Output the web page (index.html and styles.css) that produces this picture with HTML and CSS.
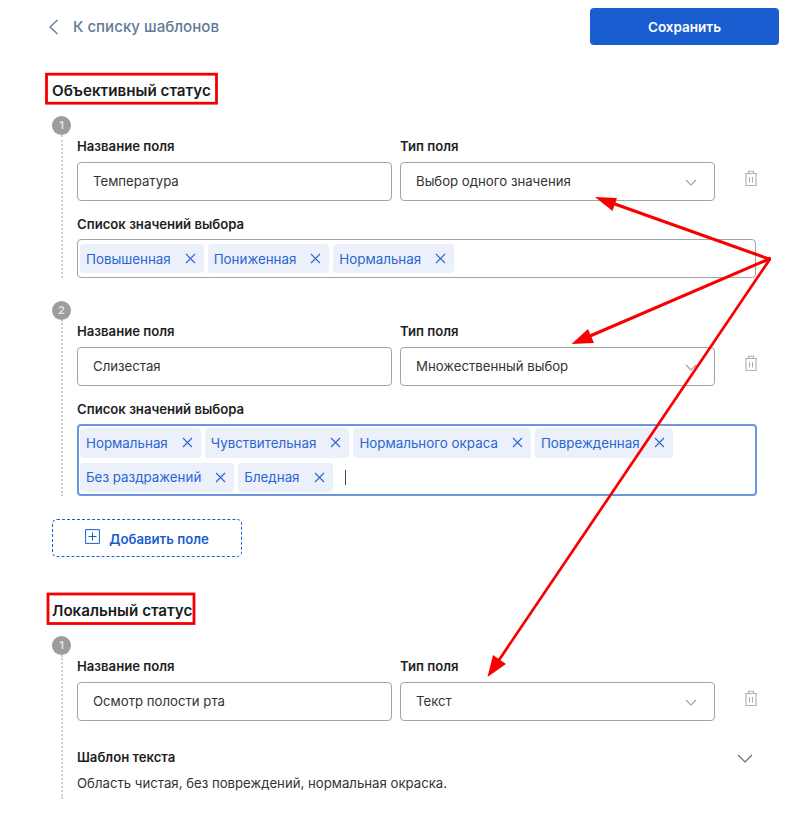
FILE: index.html
```html
<!DOCTYPE html>
<html lang="ru">
<head>
<meta charset="utf-8">
<title>Шаблон</title>
<link rel="stylesheet" href="styles.css">
</head>
<body>
<main class="page">
  <header class="topbar">
    <a class="back">
      <svg class="back-icon" width="11" height="16" viewBox="0 0 11 16"><path d="M9.5 1 L2 8 L9.5 15" fill="none" stroke="#5f7f9f" stroke-width="1.4"/></svg>
      <span>К списку шаблонов</span>
    </a>
    <button class="save">Сохранить</button>
  </header>

  <section class="section section-first">
    <h2 class="section-title">Объективный статус</h2>

    <div class="item">
      <div class="badge">1</div>
      <div class="item-body">
        <div class="row">
          <div class="col"><div class="label">Название поля</div><div class="control">Температура</div></div>
          <div class="col"><div class="label">Тип поля</div><div class="control">Выбор одного значения<svg class="chev" width="12" height="7" viewBox="0 0 12 7"><path d="M1 1 L6 6 L11 1" fill="none" stroke="#a0a0a0" stroke-width="1.1"/></svg></div></div>
          <svg class="trash" width="14" height="17" viewBox="0 0 14 17"><path d="M1 3.5H13M2 3.5V15.5H12V3.5M4.5 3.5V1.2H9.5V3.5M5.5 7V12.5M8.5 7V12.5" fill="none" stroke="#b0b0b0" stroke-width="1.1"/></svg>
        </div>
        <div class="label label-list">Список значений выбора</div>
        <div class="tags">
          <span class="tag">Повышенная<svg class="x" width="11" height="11" viewBox="0 0 11 11"><path d="M1 1L10 10M10 1L1 10" stroke="#2a66d0" stroke-width="1.1"/></svg></span>
          <span class="tag">Пониженная<svg class="x" width="11" height="11" viewBox="0 0 11 11"><path d="M1 1L10 10M10 1L1 10" stroke="#2a66d0" stroke-width="1.1"/></svg></span>
          <span class="tag">Нормальная<svg class="x" width="11" height="11" viewBox="0 0 11 11"><path d="M1 1L10 10M10 1L1 10" stroke="#2a66d0" stroke-width="1.1"/></svg></span>
        </div>
      </div>
    </div>

    <div class="item">
      <div class="badge">2</div>
      <div class="item-body">
        <div class="row">
          <div class="col"><div class="label">Название поля</div><div class="control">Слизестая</div></div>
          <div class="col"><div class="label">Тип поля</div><div class="control">Множественный выбор<svg class="chev" width="12" height="7" viewBox="0 0 12 7"><path d="M1 1 L6 6 L11 1" fill="none" stroke="#a0a0a0" stroke-width="1.1"/></svg></div></div>
          <svg class="trash" width="14" height="17" viewBox="0 0 14 17"><path d="M1 3.5H13M2 3.5V15.5H12V3.5M4.5 3.5V1.2H9.5V3.5M5.5 7V12.5M8.5 7V12.5" fill="none" stroke="#b0b0b0" stroke-width="1.1"/></svg>
        </div>
        <div class="label label-list">Список значений выбора</div>
        <div class="tags tags-focus">
          <span class="tag">Нормальная<svg class="x" width="11" height="11" viewBox="0 0 11 11"><path d="M1 1L10 10M10 1L1 10" stroke="#2a66d0" stroke-width="1.1"/></svg></span>
          <span class="tag">Чувствительная<svg class="x" width="11" height="11" viewBox="0 0 11 11"><path d="M1 1L10 10M10 1L1 10" stroke="#2a66d0" stroke-width="1.1"/></svg></span>
          <span class="tag">Нормального окраса<svg class="x" width="11" height="11" viewBox="0 0 11 11"><path d="M1 1L10 10M10 1L1 10" stroke="#2a66d0" stroke-width="1.1"/></svg></span>
          <span class="tag">Поврежденная<svg class="x" width="11" height="11" viewBox="0 0 11 11"><path d="M1 1L10 10M10 1L1 10" stroke="#2a66d0" stroke-width="1.1"/></svg></span>
          <span class="tag">Без раздражений<svg class="x" width="11" height="11" viewBox="0 0 11 11"><path d="M1 1L10 10M10 1L1 10" stroke="#2a66d0" stroke-width="1.1"/></svg></span>
          <span class="tag">Бледная<svg class="x" width="11" height="11" viewBox="0 0 11 11"><path d="M1 1L10 10M10 1L1 10" stroke="#2a66d0" stroke-width="1.1"/></svg></span>
          <span class="caret"></span>
        </div>
      </div>
    </div>

    <button class="add">
      <svg class="add-icon" width="15" height="15" viewBox="0 0 15 15"><path d="M.6.6H14.4V14.4H.6ZM7.5 3.5V11.5M3.5 7.5H11.5" fill="none" stroke="#1a5dd0" stroke-width="1"/></svg>
      <span>Добавить поле</span>
    </button>
  </section>

  <section class="section section-second">
    <h2 class="section-title">Локальный статус</h2>
    <div class="item">
      <div class="badge">1</div>
      <div class="item-body">
        <div class="row">
          <div class="col"><div class="label">Название поля</div><div class="control">Осмотр полости рта</div></div>
          <div class="col"><div class="label">Тип поля</div><div class="control">Текст<svg class="chev" width="12" height="7" viewBox="0 0 12 7"><path d="M1 1 L6 6 L11 1" fill="none" stroke="#a0a0a0" stroke-width="1.1"/></svg></div></div>
          <svg class="trash" width="14" height="17" viewBox="0 0 14 17"><path d="M1 3.5H13M2 3.5V15.5H12V3.5M4.5 3.5V1.2H9.5V3.5M5.5 7V12.5M8.5 7V12.5" fill="none" stroke="#b0b0b0" stroke-width="1.1"/></svg>
        </div>
        <div class="template-head">
          <div class="label">Шаблон текста</div>
          <svg class="big-chev" width="16" height="9" viewBox="0 0 16 9"><path d="M1 1 L8 8 L15 1" fill="none" stroke="#6a6a6a" stroke-width="1.2"/></svg>
        </div>
        <p class="template-text">Область чистая, без повреждений, нормальная окраска.</p>
      </div>
    </div>
  </section>
</main>

<svg class="annotations" width="800" height="817" viewBox="0 0 800 817">
  <g fill="none" stroke="#f40000" stroke-width="2.8">
    <rect x="46.5" y="74.2" width="170" height="29"/>
    <rect x="48" y="594" width="146" height="29.5"/>
  </g>
  <g fill="none" stroke="#f80000">
    <path d="M769 259 L612 203" stroke-width="3"/>
    <path d="M769 259 L590 336" stroke-width="3"/>
    <path d="M770 259 L499 660" stroke-width="2.7"/>
  </g>
  <g fill="#f80000">
    <polygon points="595,197 617,198 612.5,211"/>
    <polygon points="571.5,344 588,329 594,343"/>
    <polygon points="487.5,677 493,655 506,664"/>
    <circle cx="769" cy="259" r="2.2"/>
  </g>
</svg>
</body>
</html>
```

FILE: styles.css
```css
* { box-sizing: border-box; }
html, body { margin: 0; padding: 0; }
body {
  width: 800px;
  height: 817px;
  overflow: hidden;
  position: relative;
  background: #fff;
  color: #1f1f1f;
  font-family: Inter, "Liberation Sans", sans-serif;
}
.page { padding: 8px 21px 0 52px; }

.topbar {
  display: flex;
  justify-content: space-between;
  align-items: center;
  height: 37px;
  margin-left: -4px;
}
.back {
  display: flex;
  align-items: center;
  gap: 14px;
  color: #5f7b98;
  font-size: 15.1px;
  font-weight: 500;
}
.save {
  width: 189px;
  height: 37px;
  border: 0;
  border-radius: 4px;
  background: #1a5dd0;
  color: #fff;
  font: 600 13.5px Inter, "Liberation Sans", sans-serif;
}

.section-first { margin-top: 36px; }
.section-second { margin-top: 44px; }
.section-title {
  margin: 0;
  height: 20px;
  line-height: 20px;
  font-size: 15.2px;
  font-weight: 600;
  color: #1b1b1b;
}

.item { margin-top: 23px; }
.section-title + .item { margin-top: 15px; }
.badge {
  width: 19px;
  height: 19px;
  border-radius: 50%;
  background: #9c9c9c;
  color: #e4e4e4;
  font-size: 11px;
  font-weight: 600;
  line-height: 19px;
  text-align: center;
}
.item-body {
  margin-left: 9px;
  padding: 3px 0 0 14px;
  border-left: 2px dotted #cfcfcf;
}
.row { display: flex; align-items: flex-start; gap: 8px; }
.col { width: 315px; flex: none; }
.label {
  height: 16px;
  line-height: 16px;
  font-size: 13.15px;
  font-weight: 600;
  color: #1f1f1f;
}
.label-list { margin-top: 15.5px; }
.control {
  display: flex;
  align-items: center;
  justify-content: space-between;
  height: 38.5px;
  margin-top: 8px;
  padding: 0 17px 0 15px;
  border: 1px solid #a4a4a4;
  border-radius: 4px;
  font-size: 13.2px;
  color: #333;
}
.chev { margin-top: 2px; }
.trash { margin: 32px 0 0 21px; flex: none; }

.tags {
  display: flex;
  flex-wrap: wrap;
  gap: 5px 4px;
  align-items: center;
  margin-top: 7px;
  padding: 3.75px 2px;
  width: 679px;
  height: 39px;
  border: 1px solid #a4a4a4;
  border-radius: 4px;
}
.tags-focus {
  border: 2px solid #6c97e0;
  padding: 2px 1px;
  width: 680px;
  height: 72px;
}
.tag {
  display: inline-flex;
  align-items: center;
  gap: 14px;
  height: 29.5px;
  padding: 0 8px 0 6px;
  border-radius: 4px;
  background: #ebf0fb;
  color: #2a66d0;
  font-size: 13.35px;
}
.caret {
  width: 1.5px;
  height: 15px;
  margin-left: 8px;
  background: #444;
}

.add {
  display: flex;
  align-items: center;
  justify-content: center;
  gap: 9px;
  width: 190px;
  height: 38px;
  margin-top: 23px;
  padding-top: 2px;
  border: 1px dashed #1a5dd0;
  border-radius: 5px;
  background: #fff;
  color: #1a5dd0;
  font: 600 13.2px Inter, "Liberation Sans", sans-serif;
}
.add-icon { margin-top: -5px; }

.template-head {
  display: flex;
  justify-content: space-between;
  align-items: center;
  width: 676px;
  margin-top: 28px;
}
.big-chev { margin-top: 4px; }
.template-text {
  margin: 10px 0 0;
  padding-bottom: 8px;
  line-height: 16px;
  font-size: 13.2px;
  color: #333;
}

.annotations {
  position: absolute;
  left: 0;
  top: 0;
  pointer-events: none;
}
```
